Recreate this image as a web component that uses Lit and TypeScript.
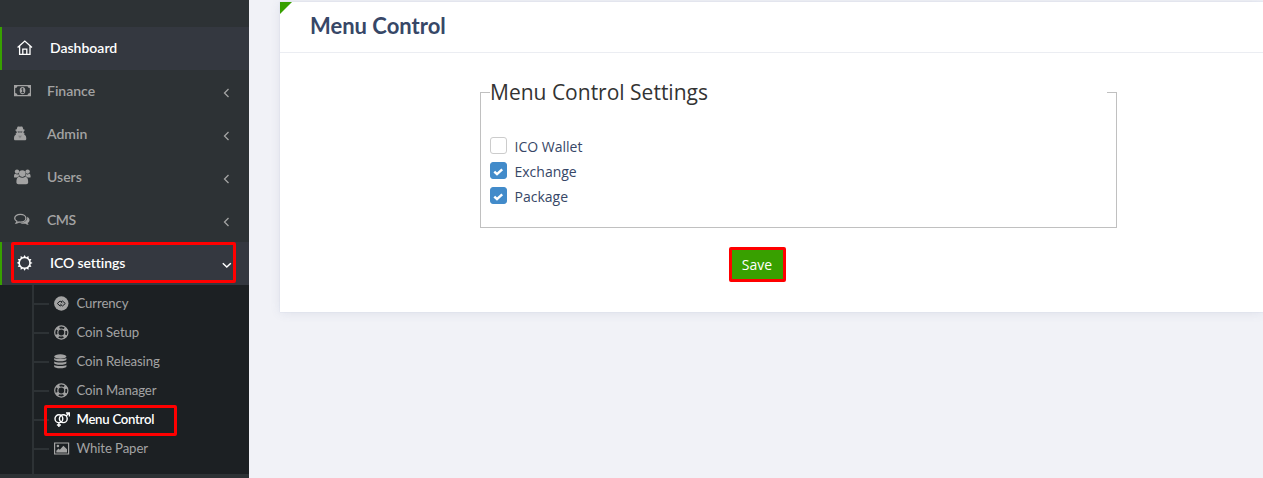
import { LitElement, html, css, svg } from "lit";
import { customElement, property } from "lit/decorators.js";

const icons: Record<string, unknown> = {
  home: svg`<g fill="none" stroke="currentColor" stroke-width="1.300"><path d="M.6 7.600 7.800 1.100l7.200 6.500M2.600 6v8.400h10.400V6M5.800 14.400V9.200h4v5.200"/></g>`,
  money: svg`<path fill="none" stroke="currentColor" stroke-width="1.200" d="M.6 2.600h15.800v10H.6z"/><path d="M1 2.600h2.500A2.500 2.500 0 0 1 1 5.100zM16 2.600h-2.500A2.500 2.500 0 0 0 16 5.100zM1 12.600h2.500A2.500 2.500 0 0 0 1 10.100zM16 12.600h-2.500A2.500 2.500 0 0 1 16 10.100z"/><ellipse cx="8.500" cy="7.600" rx="2.800" ry="3.600"/><path d="M7.400 6.200 8.700 5.300v4.200M7.300 9.600h2.700" fill="none" stroke="#2d3235" stroke-width="1"/>`,
  secret: svg`<path d="M3.400 1c.8-.9 1.700-.3 2.600-.3s1.800-.6 2.600.3l.7 2.200 1.800.7-1.300 1c.1.900-.1 1.600-.5 2.100l1.300.3-.4 1.100c1.500.8 2.100 2 2.100 4.400 0 1-.7 1.500-1.700 1.500H1.500C.5 14.300 0 13.800 0 12.800c0-2.400.5-3.600 2-4.400l-.4-1.100L2.900 7c-.4-.7-.6-1.300-.5-2.100L.9 3.900l1.800-.7z"/><path d="M3.500 5.300h2l.5.500.5-.5h2L8 6.800H6.700L6 6.200l-.7.600H4zM4.700 9.200l.9.900-.5 2.500zM7.300 9.200l-.9.900.5 2.500z" fill="#2d3235" opacity=".6"/>`,
  users: svg`<circle cx="3" cy="2.600" r="2.200"/><circle cx="13.600" cy="2.600" r="2.200"/><circle cx="8.300" cy="4.600" r="3.300"/><path d="M0 8c0-2 .4-3.200 1.500-3.200.8.700 2 .8 3 .3.200 1 .4 1.700.9 2.200-1.100.1-1.900.6-2.400 1.300H1C.3 8.600 0 8.400 0 8zM16.600 8c0-2-.4-3.200-1.500-3.200-.8.700-2 .8-3 .3-.2 1-.4 1.700-.9 2.200 1.100.1 1.900.6 2.400 1.300h2c.7 0 1-.2 1-.6zM2.400 13.300c0-3.200.8-5.500 2.900-5.500 1.700 1.300 4.300 1.300 6 0 2.100 0 2.900 2.300 2.900 5.500 0 1.300-.8 1.900-2 1.900H4.400c-1.200 0-2-.6-2-1.900z"/>`,
  comments: svg`<path fill="none" stroke="currentColor" stroke-width="1.300" d="M6.300 2.300c3.300 0 5.600 1.800 5.600 3.900s-2.300 3.900-5.600 3.900c-.5 0-1-.1-1.400-.2-.8.700-1.700 1-2.700 1.100.4-.5.700-1 .8-1.700C1.500 8.600.7 7.500.7 6.200.7 4.100 3 2.300 6.300 2.300z"/><path d="M13.200 4.700c1.500.8 2.300 2 2.300 3.400 0 1.200-.7 2.300-1.900 3 .2.700.6 1.200 1.100 1.800-1.300 0-2.300-.5-3.200-1.200-1.800.3-3.800.1-5.200-.7 3.700-.1 6.900-2.200 6.900-5z"/>`,
  sun: svg`<circle cx="7.600" cy="7.900" r="5.400" fill="none" stroke="currentColor" stroke-width="1.500"/>${[...Array(12)].map((_, i) => svg`<path transform="rotate(${i * 30} 7.600 7.900)" d="M6.200 2.300 7.600 0l1.400 2.300z"/>`)}`,
  chain: svg`<circle cx="7.300" cy="7.500" r="7.200"/><g fill="none" stroke="#1c2023" stroke-width="1"><path d="M7.500 9.300 6.100 10 3.300 7.500 6.100 5 8.300 7M7.100 5.700 8.500 5l2.800 2.500L8.500 10 6.300 8"/></g>`,
  ring: svg`<g fill="none" stroke="currentColor"><circle cx="7.300" cy="7.500" r="6.600" stroke-width="1.200"/><circle cx="7.300" cy="7.500" r="3.500" stroke-width="1.200"/><circle cx="7.300" cy="7.500" r="5.200" stroke-width="3" stroke-dasharray="3.200 4.968" stroke-dashoffset="-2.484"/></g>`,
  database: svg`<ellipse cx="6.300" cy="2.500" rx="6.100" ry="2.200"/>${[0, 3.5, 7].map((y) => svg`<path transform="translate(0 ${y})" d="M.2 3.900c1.500 1.500 10.700 1.500 12.200 0v1.500c0 2.400-12.200 2.400-12.200 0z"/>`)}`,
  venus: svg`<g fill="none" stroke="currentColor" stroke-width="1.400"><circle cx="4.900" cy="6.700" r="3.900"/><circle cx="9.300" cy="6.700" r="3.900"/><path d="M4.900 10.700v4.200M2.900 13h4M12.100 3.900l3-2.900M12 1h3.400v3.400"/></g>`,
  picture: svg`<path fill="none" stroke="currentColor" stroke-width="1.200" d="M.6 2h14v11H.6z"/><circle cx="3.900" cy="5" r="1.300"/><path d="M2.300 11.500V9.700l2.200-2.200 1.300 1.300 3.600-4L13 8.200v3.300z"/>`,
  left: svg`<path d="M6.500 1 2.500 5l4 4" fill="none" stroke="currentColor" stroke-width="1.300"/>`,
  down: svg`<path d="M.8 3.200 4.800 7l4-3.800" fill="none" stroke="currentColor" stroke-width="1.500"/>`,
  check: svg`<path d="m1.300 5.600 2.700 2.500 5.200-4.700" fill="none" stroke="currentColor" stroke-width="2.500"/>`,
};

@customElement("ui-icon")
class UiIcon extends LitElement {
  @property() name = "";
  @property({ type: Number }) size = 17;
  static styles = css`:host { display: block; } svg { display: block; fill: currentColor; }`;
  render() {
    return html`<svg width=${this.size} height=${this.size} viewBox="0 0 ${this.size} ${this.size}">${icons[this.name]}</svg>`;
  }
}

const menu = [
  { label: "Dashboard", icon: "home", key: "dashboard", active: true, arrow: "" },
  { label: "Finance", icon: "money", key: "finance", active: false, arrow: "left" },
  { label: "Admin", icon: "secret", key: "admin", active: false, arrow: "left" },
  { label: "Users", icon: "users", key: "users", active: false, arrow: "left" },
  { label: "CMS", icon: "comments", key: "cms", active: false, arrow: "left" },
  { label: "ICO settings", icon: "sun", key: "ico", active: true, arrow: "down" },
];
const submenu = [
  ["Currency", "chain"],
  ["Coin Setup", "ring"],
  ["Coin Releasing", "database"],
  ["Coin Manager", "ring"],
  ["Menu Control", "venus"],
  ["White Paper", "picture"],
];
const options: [string, boolean][] = [["ICO Wallet", false], ["Exchange", true], ["Package", true]];

@customElement("app-root")
class AppRoot extends LitElement {
  static styles = css`
    :host { display: flex; height: 478px; overflow: hidden; background: #f1f2f7; font-family: "Open Sans", sans-serif; }
    * { box-sizing: border-box; }
    .side { width: 249px; flex: none; padding-top: 27px; background: #2d3235; font-family: Lato, sans-serif; color: #a3a3a3; }
    .item { position: relative; display: flex; align-items: center; height: 43px; padding: 0 17px 2px 14px; font-size: 14px; font-weight: 600; }
    .item .glyph { margin-top: 2px; }
    .item .label { margin-left: 16px; }
    .item.active { background: #343840; color: #fff; border-left: 2px solid #38a000; padding-left: 15px; }
    .label.ico { letter-spacing: -.1px; }
    .label.cms { letter-spacing: -.5px; }
    .arrow { margin: 5px 0 0 auto; }
    .active .arrow { margin-top: 4px; }
    .mark { position: absolute; border: 3px solid #f00; border-radius: 2px; }
    .mark-ico { left: 9px; top: 0; width: 225px; height: 41px; }
    .mark-menu { left: 10px; top: 0; width: 133px; height: 31px; }
    .sub { height: 189px; padding-left: 32px; background: #1c2023; }
    .rail { height: 189px; padding-top: 4px; border-left: 2px solid #2d3235; }
    .row { position: relative; display: flex; align-items: center; height: 29px; font-size: 13.200px; }
    .branch { width: 15px; height: 2px; background: #2d3235; margin-right: 5px; }
    .row .label { margin: -2px 0 0 6.500px; letter-spacing: -.1px; }
    .row ui-icon { margin-top: 1px; }
    .row.current { color: #fff; font-weight: 600; }
    .row.current .label { letter-spacing: -.27px; }
    .main { flex: 1; padding: 2px 0 0 31px; }
    .card { position: relative; height: 310px; background: #fff; box-shadow: 0 1px 10px rgba(69, 90, 140, .11), 0 0 1px rgba(69, 100, 160, .2); }
    .corner { position: absolute; left: 0; top: 0; width: 12px; height: 12px; background: #38a000; clip-path: polygon(0 0, 100% 0, 0 100%); }
    .head { height: 51px; padding-left: 30px; border-bottom: 1px solid #ebedf2; font: 700 22px/47px Lato, sans-serif; color: #374767; }
    .form { display: flex; flex-direction: column; align-items: center; width: 637px; margin-left: 200px; padding-top: 24px; }
    fieldset { width: 637px; height: 151px; margin: 0; padding: 0 9px; border: 1px solid silver; }
    legend { width: 617px; padding: 0; font-size: 21px; line-height: 30px; color: #333; }
    .options { padding-top: 30px; }
    .option { display: flex; height: 25px; font-size: 14px; line-height: 20px; color: #374767; }
    .box { width: 17px; height: 17px; margin: 0 7.500px 0 0; border: 1px solid #ccc; border-radius: 3px; color: #fff; }
    .box.on { background: #428bca; border-color: #428bca; padding: 3px 2px; }
    button { width: 57px; height: 35px; margin: 19px 0 0 -83px; padding: 0; border: 3px solid #f00; border-radius: 2px; background: #38a000; color: #fff; font: 14px "Open Sans", sans-serif; }
  `;
  render() {
    return html`
      <nav class="side">
        ${menu.map((m) => html`<div class="item ${m.active ? "active" : ""}">
          <ui-icon class="glyph" name=${m.icon}></ui-icon><span class="label ${m.key}">${m.label}</span>
          ${m.arrow ? html`<ui-icon class="arrow" name=${m.arrow} size="10"></ui-icon>` : ""}
          ${m.key === "ico" ? html`<span class="mark mark-ico"></span>` : ""}
        </div>`)}
        <div class="sub"><div class="rail">
          ${submenu.map(([label, icon]) => html`<div class="row ${label === "Menu Control" ? "current" : ""}">
            <span class="branch"></span><ui-icon name=${icon} size="16"></ui-icon><span class="label">${label}</span>
            ${label === "Menu Control" ? html`<span class="mark mark-menu"></span>` : ""}
          </div>`)}
        </div></div>
      </nav>
      <main class="main">
        <section class="card">
          <span class="corner"></span>
          <div class="head">Menu Control</div>
          <div class="form">
            <fieldset>
              <legend>Menu Control Settings</legend>
              <div class="options">
                ${options.map(([label, on]) => html`<label class="option">
                  <span class="box ${on ? "on" : ""}">${on ? html`<ui-icon name="check" size="11"></ui-icon>` : ""}</span><span>${label}</span>
                </label>`)}
              </div>
            </fieldset>
            <button>Save</button>
          </div>
        </section>
      </main>`;
  }
}
